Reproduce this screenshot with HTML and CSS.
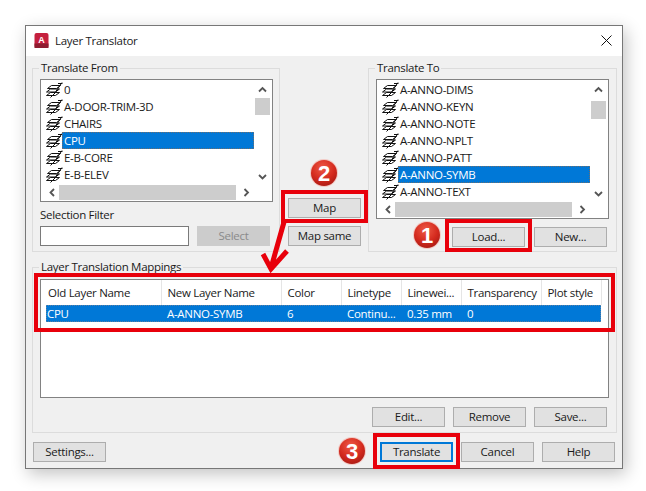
FILE: index.html
```html
<!DOCTYPE html>
<html lang="en">
<head>
<meta charset="utf-8">
<title>Layer Translator</title>
<link rel="stylesheet" href="styles.css">
</head>
<body>
<svg class="defs" width="0" height="0" aria-hidden="true">
  <symbol id="layer" viewBox="0 0 17 16">
    <path class="ly" d="M.5 13.5 4.5 10.5H13.5L9.5 13.5Z"/>
    <path class="ly" d="M.5 10 4.5 7H13.5L9.5 10Z"/>
    <path class="ly" d="M1.5 6.5 5.5 3.5H14.5L10.5 6.5Z"/>
    <path class="lx" d="M4.5 15.5 9 11M9.5 10 16 .5M12 1.5H16.5"/>
  </symbol>
  <symbol id="up" viewBox="0 0 15 17"><path class="chev" d="M4 10.5 7.5 7 11 10.5"/></symbol>
  <symbol id="down" viewBox="0 0 15 17"><path class="chev" d="M4 7 7.5 10.5 11 7"/></symbol>
  <symbol id="left" viewBox="0 0 13 15"><path class="chev" d="M8 4 4.5 7.5 8 11"/></symbol>
  <symbol id="right" viewBox="0 0 19 15"><path class="chev" d="M8.5 4 12 7.5 8.5 11"/></symbol>
</svg>

<main class="window">
  <header class="titlebar">
    <svg class="logo" viewBox="0 0 15 15" aria-hidden="true">
      <rect x="0.5" y="0" width="14" height="15" rx="2" fill="#c5203e"/>
      <rect x="0.5" y="10.5" width="14" height="4.5" fill="#8e1c30"/>
      <text x="7.5" y="9.5" class="logo-a">A</text>
    </svg>
    <span class="title">Layer Translator</span>
    <svg class="close" viewBox="0 0 11 11" aria-hidden="true"><path d="M.5.5 10.5 10.5M10.5.5 .5 10.5"/></svg>
  </header>

  <div class="content">
    <div class="top">
      <fieldset class="group group-from">
        <legend>Translate From</legend>
        <div class="list list-short">
          <ul class="rows">
            <li><svg class="ic"><use href="#layer"/></svg><span>0</span></li>
            <li><svg class="ic"><use href="#layer"/></svg><span>A-DOOR-TRIM-3D</span></li>
            <li><svg class="ic"><use href="#layer"/></svg><span>CHAIRS</span></li>
            <li class="sel"><svg class="ic"><use href="#layer"/></svg><span>CPU</span></li>
            <li><svg class="ic"><use href="#layer"/></svg><span>E-B-CORE</span></li>
            <li><svg class="ic"><use href="#layer"/></svg><span>E-B-ELEV</span></li>
          </ul>
          <div class="vbar">
            <svg class="sb-btn"><use href="#up"/></svg>
            <div class="vthumb"></div>
            <svg class="sb-btn sb-end"><use href="#down"/></svg>
          </div>
          <div class="hbar">
            <svg class="sb-l"><use href="#left"/></svg>
            <div class="hthumb"></div>
            <svg class="sb-r"><use href="#right"/></svg>
          </div>
        </div>
        <label class="filter-label" for="filter">Selection Filter</label>
        <div class="filter-row">
          <input id="filter" class="filter" type="text">
          <button class="btn btn-disabled" type="button">Select</button>
        </div>
      </fieldset>

      <div class="mid">
        <button class="btn" type="button">Map</button>
        <button class="btn" type="button">Map same</button>
      </div>

      <fieldset class="group group-to">
        <legend>Translate To</legend>
        <div class="list list-tall">
          <ul class="rows">
            <li><svg class="ic"><use href="#layer"/></svg><span>A-ANNO-DIMS</span></li>
            <li><svg class="ic"><use href="#layer"/></svg><span>A-ANNO-KEYN</span></li>
            <li><svg class="ic"><use href="#layer"/></svg><span>A-ANNO-NOTE</span></li>
            <li><svg class="ic"><use href="#layer"/></svg><span>A-ANNO-NPLT</span></li>
            <li><svg class="ic"><use href="#layer"/></svg><span>A-ANNO-PATT</span></li>
            <li class="sel"><svg class="ic"><use href="#layer"/></svg><span>A-ANNO-SYMB</span></li>
            <li><svg class="ic"><use href="#layer"/></svg><span>A-ANNO-TEXT</span></li>
          </ul>
          <div class="vbar">
            <svg class="sb-btn"><use href="#up"/></svg>
            <div class="vthumb vthumb-low"></div>
            <svg class="sb-btn sb-end"><use href="#down"/></svg>
          </div>
          <div class="hbar">
            <svg class="sb-l"><use href="#left"/></svg>
            <div class="hthumb"></div>
            <svg class="sb-r"><use href="#right"/></svg>
          </div>
        </div>
        <div class="btn-row">
          <button class="btn" type="button">Load...</button>
          <button class="btn" type="button">New...</button>
        </div>
      </fieldset>
    </div>

    <fieldset class="group group-map">
      <legend>Layer Translation Mappings</legend>
      <div class="table-box">
        <table class="map-table">
          <colgroup>
            <col class="c115"><col class="c120"><col class="c60"><col class="c60"><col class="c60"><col class="c80"><col class="c60">
          </colgroup>
          <thead>
            <tr><th>Old Layer Name</th><th>New Layer Name</th><th>Color</th><th>Linetype</th><th>Linewei...</th><th>Transparency</th><th>Plot style</th></tr>
          </thead>
          <tbody>
            <tr><td>CPU</td><td>A-ANNO-SYMB</td><td>6</td><td>Continu...</td><td>0.35 mm</td><td>0</td><td></td></tr>
          </tbody>
        </table>
      </div>
      <div class="btn-row btn-row-map">
        <button class="btn" type="button">Edit...</button>
        <button class="btn" type="button">Remove</button>
        <button class="btn" type="button">Save...</button>
      </div>
    </fieldset>

    <footer class="footer">
      <button class="btn" type="button">Settings...</button>
      <div class="footer-right">
        <button class="btn btn-default" type="button">Translate</button>
        <button class="btn" type="button">Cancel</button>
        <button class="btn" type="button">Help</button>
      </div>
    </footer>
  </div>
</main>

<svg class="notes" viewBox="0 0 646 491" aria-hidden="true">
  <defs>
    <radialGradient id="badge" cx="45%" cy="30%" r="75%">
      <stop offset="0" stop-color="#ee5a46"/>
      <stop offset=".6" stop-color="#d42a1e"/>
      <stop offset="1" stop-color="#a81a14"/>
    </radialGradient>
  </defs>
  <g class="red-box">
    <rect x="283" y="192" width="83" height="29"/>
    <rect x="447" y="221" width="83" height="29"/>
    <rect x="36" y="275" width="577" height="55"/>
    <rect x="375" y="435" width="83" height="32"/>
  </g>
  <path class="arrow" d="M284 222 271 268M263 254 271 269 287 251"/>
  <g>
    <circle class="badge-ring" cx="324" cy="173" r="14"/><circle cx="324" cy="173" r="13" fill="url(#badge)"/>
    <text class="badge-num" x="324" y="181">2</text>
    <circle class="badge-ring" cx="427" cy="235" r="14"/><circle cx="427" cy="235" r="13" fill="url(#badge)"/>
    <text class="badge-num" x="427" y="243">1</text>
    <circle class="badge-ring" cx="352" cy="451" r="14"/><circle cx="352" cy="451" r="13" fill="url(#badge)"/>
    <text class="badge-num" x="352" y="459">3</text>
  </g>
</svg>
</body>
</html>
```

FILE: styles.css
```css
* { box-sizing: border-box; }

html, body { margin: 0; height: 100%; }

body {
  padding: 25px 0 0 25px;
  background: #fff;
  font: 11.5px/14px "Open Sans", "Noto Sans", sans-serif;
  letter-spacing: -0.3px;
  color: #1a1a1a;
  overflow: hidden;
}

.defs { position: absolute; }

.window {
  width: 598px;
  height: 444px;
  border: 1px solid #777;
  background: #f0f0f0;
  box-shadow: 3px 5px 16px rgba(0, 0, 0, .24);
  display: flex;
  flex-direction: column;
}

.titlebar {
  height: 30px;
  flex: none;
  background: #fff;
  display: flex;
  align-items: center;
  padding: 0 10px 1px 8px;
}

.logo { width: 15px; height: 15px; margin-right: 6px; }
.logo-a { font: bold 9px "Liberation Sans", sans-serif; letter-spacing: 0; fill: #fff; text-anchor: middle; }
.title { flex: 1; }
.close { width: 11px; height: 11px; }
.close path { stroke: #111; stroke-width: 1; fill: none; }

.content { flex: 1; padding: 5px 5px 0 6px; display: flex; flex-direction: column; }

.top { display: flex; height: 191px; }

.group {
  margin: 0;
  min-width: 0;
  border: 1px solid #dcdcdc;
  padding: 0 7px;
}

.group legend { padding: 0 2px; margin-left: -1px; line-height: 14px; }

.group-from { width: 248px; }
.group-to { width: 249px; }

.mid {
  width: 88px;
  padding: 137px 7px 0 8px;
  display: flex;
  flex-direction: column;
  gap: 8px;
}

.btn {
  width: 73px;
  height: 20px;
  padding: 0 0 1px;
  border: 1px solid #adadad;
  background: #e1e1e1;
  color: #1a1a1a;
  font: inherit;
  letter-spacing: inherit;
  flex: none;
}

.btn-disabled { background: #cccccc; border-color: #cccccc; color: #8a8a8a; }
.btn-default { border: 2px solid #0078d7; }

.list {
  margin-top: 4px;
  width: 233px;
  border: 1px solid #828282;
  background: #fff;
  padding: 1px 2px 1px 5px;
  display: grid;
  grid-template-columns: 209px 15px;
  grid-template-rows: 1fr 15px;
}

.list-short { height: 123px; }
.list-tall { height: 140px; }

.rows { margin: 0; padding: 0; list-style: none; }

.rows li { height: 17px; display: flex; align-items: center; white-space: nowrap; }
.rows li span { flex: 1; padding-left: 2px; margin-left: -1px; margin-right: 1px; line-height: 17px; height: 17px; }

.ic { width: 17px; height: 16px; flex: none; }

.ly { fill: #fff; stroke: #111; stroke-width: 1; }
.lx { fill: none; stroke: #111; stroke-width: 1; }
.chev { fill: none; stroke: #555; stroke-width: 1.8; }

.sel span { background: #0078d7; color: #fff; outline: 1px dotted #6e6e6e; outline-offset: -1px; }
.sel .ly { fill: #4f97d6; stroke: #2a6db0; }
.sel .lx { stroke: #2a6db0; }

.vbar { display: flex; flex-direction: column; }
.sb-btn { width: 15px; height: 17px; flex: none; }
.sb-end { margin-top: auto; }
.vthumb { height: 17px; background: #cdcdcd; }
.vthumb-low { height: 18px; margin-top: 3px; }

.hbar { grid-column: 1; display: flex; }
.sb-l { width: 13px; height: 15px; flex: none; }
.hthumb { width: 177px; background: #cdcdcd; }
.sb-r { width: 19px; height: 15px; flex: none; }

.filter-label { display: block; margin-top: 6px; line-height: 14px; }

.filter-row { display: flex; gap: 8px; margin-top: 4px; }

.filter { width: 149px; height: 20px; border: 1px solid #7a7a7a; background: #fff; padding: 0; }

.btn-row { display: flex; justify-content: flex-end; gap: 9px; margin-top: 8px; padding-right: 2px; }

.group-map { margin-top: 8px; height: 173px; }

.table-box {
  margin-top: 5px;
  width: 569px;
  height: 119px;
  border: 1px solid #828282;
  background: #fff;
  padding: 0 5px;
}

.map-table { table-layout: fixed; width: 555px; border-collapse: collapse; }

.c115 { width: 115px; }
.c120 { width: 120px; }
.c60 { width: 60px; }
.c80 { width: 80px; }

.map-table th {
  height: 25px;
  padding: 0 0 0 6px;
  font-weight: 400;
  text-align: left;
  border-right: 1px solid #e5e5e5;
  white-space: nowrap;
}

.map-table td {
  height: 17px;
  padding: 0 0 0 6px;
  line-height: 15px;
  background: #0078d7;
  color: #fff;
  white-space: nowrap;
  overflow: hidden;
}

.map-table th:first-child { padding-left: 2px; }
.map-table td:first-child { padding-left: 1px; }

.map-table tbody tr { outline: 1px dotted #5f7f9f; outline-offset: -1px; }

.btn-row-map { gap: 8px; margin-top: 9px; }

.footer { display: flex; justify-content: space-between; margin-top: 9px; padding: 0 2px 0 1px; }
.footer-right { display: flex; gap: 8px; }

.notes { position: absolute; left: 0; top: 0; width: 646px; height: 491px; pointer-events: none; }

.red-box rect { fill: none; stroke: #e8000b; stroke-width: 4; }
.arrow { fill: none; stroke: #e8000b; stroke-width: 5; }
.badge-ring { fill: #f2c9c4; }
.badge-num { font: bold 22px "Liberation Sans", sans-serif; letter-spacing: 0; fill: #fff; text-anchor: middle; }
```
